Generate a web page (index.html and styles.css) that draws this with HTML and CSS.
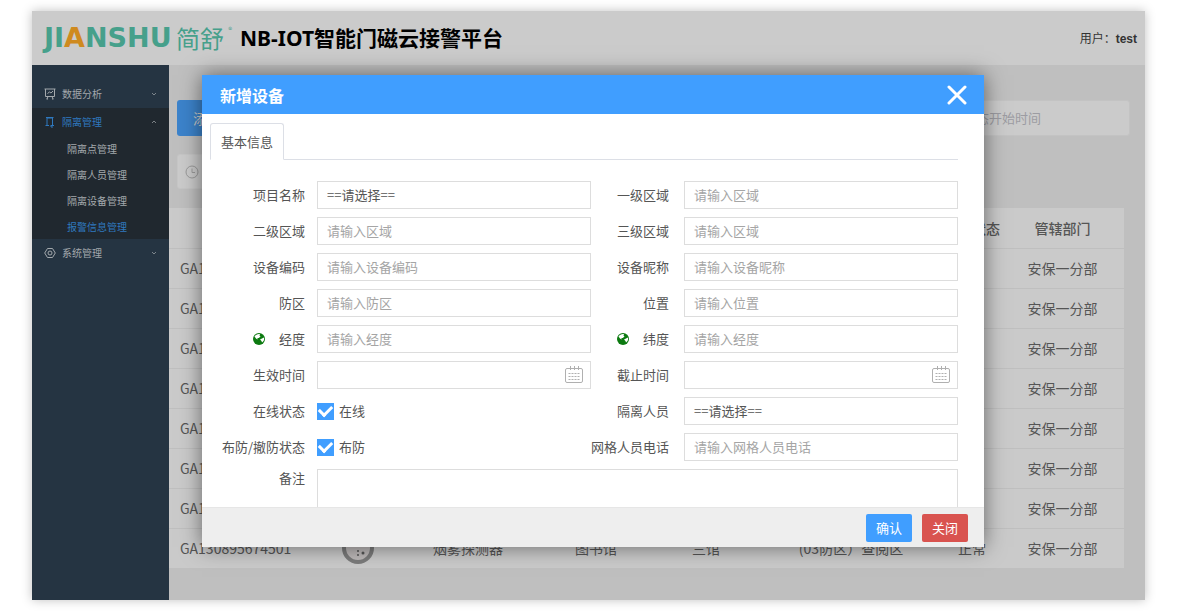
FILE: index.html
```
<!DOCTYPE html>
<html lang="zh-CN">
<head>
<meta charset="utf-8">
<title>NB-IOT智能门磁云接警平台</title>
<link rel="stylesheet" href="styles.css">
</head>
<body>
<div class="shell">
  <header class="topbar">
    <div class="logo"><span class="logo-latin">JI<span class="logo-accent">A</span>NSHU</span><span class="logo-han">简舒</span><sup class="logo-mark">®</sup></div>
    <h1 class="title">NB-IOT智能门磁云接警平台</h1>
    <div class="user">用户：<strong>test</strong></div>
  </header>
  <div class="main">
    <nav class="sidebar">
      <a class="item" href="#"><svg class="icon" viewBox="0 0 12 12"><path d="M.5 1h11M1.500 1v7.500h9V1M3.500 5.500l2-1.500 1.500 1 2-2M4 8.500L3 11M8 8.500L9 11M2.500 11h1.500M8 11h1.500"/></svg><span class="name">数据分析</span><svg class="chev" viewBox="0 0 6 6"><path d="M1 2l2 2 2-2"/></svg></a>
      <div class="group">
        <a class="item active" href="#"><svg class="icon" viewBox="0 0 12 12"><path d="M3 9.500V2h5.500v7.500M1.500 9.500H5M7 9.500h3M2 1.500h7.500M7 9v2h2"/></svg><span class="name">隔离管理</span><svg class="chev" viewBox="0 0 6 6"><path d="M1 4l2-2 2 2"/></svg></a>
        <a class="sub" href="#">隔离点管理</a>
        <a class="sub" href="#">隔离人员管理</a>
        <a class="sub" href="#">隔离设备管理</a>
        <a class="sub active" href="#">报警信息管理</a>
      </div>
      <a class="item" href="#"><svg class="icon" viewBox="0 0 12 12"><path d="M3.500 1.500h5L11.300 6l-2.800 4.500h-5L.7 6z"/><circle cx="6" cy="6" r="2"/></svg><span class="name">系统管理</span><svg class="chev" viewBox="0 0 6 6"><path d="M1 2l2 2 2-2"/></svg></a>
    </nav>
    <section class="content">
      <div class="tools">
        <button class="add" type="button">添加</button>
        <input class="search" type="text" aria-label="开始时间" placeholder="状态开始时间">
      </div>
      <div class="tools second">
        <div class="time"><svg class="clock" viewBox="0 0 14 14"><circle cx="7" cy="7" r="6"/><path d="M7 3.500V7.500h3"/></svg></div>
      </div>
      <table class="grid">
        <colgroup><col class="c1"><col class="c2"><col class="c3"><col class="c4"><col class="c5"><col class="c6"><col class="c7"><col class="c8"></colgroup>
        <thead><tr><th></th><th></th><th></th><th></th><th></th><th></th><th>报警状态</th><th>管辖部门</th></tr></thead>
        <tbody>
          <tr><td>GA1</td><td></td><td></td><td></td><td></td><td></td><td></td><td>安保一分部</td></tr>
          <tr><td>GA1</td><td></td><td></td><td></td><td></td><td></td><td></td><td>安保一分部</td></tr>
          <tr><td>GA1</td><td></td><td></td><td></td><td></td><td></td><td></td><td>安保一分部</td></tr>
          <tr><td>GA1</td><td></td><td></td><td></td><td></td><td></td><td></td><td>安保一分部</td></tr>
          <tr><td>GA1</td><td></td><td></td><td></td><td></td><td></td><td></td><td>安保一分部</td></tr>
          <tr><td>GA1</td><td></td><td></td><td></td><td></td><td></td><td></td><td>安保一分部</td></tr>
          <tr><td>GA1</td><td></td><td></td><td></td><td></td><td></td><td></td><td>安保一分部</td></tr>
          <tr><td>GA130895674501</td><td><svg class="device" viewBox="0 0 32 32"><circle cx="16" cy="16" r="14" fill="#bdb9b9" stroke="#7b7b7b" stroke-width="4"/><g fill="#555"><circle cx="16" cy="19" r="1"/><circle cx="16" cy="23" r="1"/><circle cx="21" cy="21" r="1.500"/></g></svg></td><td>烟雾探测器</td><td>图书馆</td><td>三馆</td><td>(03防区）查阅区</td><td>正常</td><td>安保一分部</td></tr>
        </tbody>
      </table>
    </section>
  </div>

  <div class="modal" role="dialog" aria-labelledby="dlg-title">
    <div class="modal-head">
      <h2 class="modal-title" id="dlg-title">新增设备</h2>
      <button class="close" type="button" aria-label="关闭窗口"><svg class="close-icon" viewBox="0 0 20 20"><path d="M2 2l16 16M18 2L2 18"/></svg></button>
    </div>
    <form class="modal-body">
      <div class="tabs"><button class="tab" type="button">基本信息</button></div>
      <div class="fields">
        <label class="label" for="project">项目名称</label>
        <select class="box" id="project"><option>==请选择==</option></select>
        <label class="label right" for="area1">一级区域</label>
        <input class="box" id="area1" type="text" placeholder="请输入区域">

        <label class="label" for="area2">二级区域</label>
        <input class="box" id="area2" type="text" placeholder="请输入区域">
        <label class="label right" for="area3">三级区域</label>
        <input class="box" id="area3" type="text" placeholder="请输入区域">

        <label class="label" for="code">设备编码</label>
        <input class="box" id="code" type="text" placeholder="请输入设备编码">
        <label class="label right" for="nick">设备昵称</label>
        <input class="box" id="nick" type="text" placeholder="请输入设备昵称">

        <label class="label" for="zone">防区</label>
        <input class="box" id="zone" type="text" placeholder="请输入防区">
        <label class="label right" for="place">位置</label>
        <input class="box" id="place" type="text" placeholder="请输入位置">

        <label class="label" for="lng"><svg class="globe" viewBox="0 0 12 12"><circle cx="6" cy="6" r="6" fill="#0c7a10"/><path fill="#fff" d="M1.500 3.500C2.500 1.500 5 .6 7 1L6.500 2.500 7.500 3.500 5.800 5 4.500 5 4.500 6.500 3 5.500zM7 6.500l4-2c.5 2-.3 4-2 5L8.500 8z"/></svg>经度</label>
        <input class="box" id="lng" type="text" placeholder="请输入经度">
        <label class="label right" for="lat"><svg class="globe" viewBox="0 0 12 12"><circle cx="6" cy="6" r="6" fill="#0c7a10"/><path fill="#fff" d="M1.500 3.500C2.500 1.500 5 .6 7 1L6.500 2.500 7.500 3.500 5.800 5 4.500 5 4.500 6.500 3 5.500zM7 6.500l4-2c.5 2-.3 4-2 5L8.500 8z"/></svg>纬度</label>
        <input class="box" id="lat" type="text" placeholder="请输入经度">

        <label class="label" for="start">生效时间</label>
        <div class="date"><input class="box" id="start" type="text"><svg class="cal" viewBox="0 0 18 18"><rect x=".5" y="2.500" width="17" height="14" rx="1.500"/><path d="M5.500 0v4M9.500 0v4M13.500 0v4"/><path class="dots" d="M3.500 7.500h12M3.500 10.500h12M3.500 13.500h12"/></svg></div>
        <label class="label right" for="end">截止时间</label>
        <div class="date"><input class="box" id="end" type="text"><svg class="cal" viewBox="0 0 18 18"><rect x=".5" y="2.500" width="17" height="14" rx="1.500"/><path d="M5.500 0v4M9.500 0v4M13.500 0v4"/><path class="dots" d="M3.500 7.500h12M3.500 10.500h12M3.500 13.500h12"/></svg></div>

        <span class="label">在线状态</span>
        <label class="tick"><input class="check" type="checkbox" checked>在线</label>
        <label class="label right" for="person">隔离人员</label>
        <select class="box" id="person"><option>==请选择==</option></select>

        <span class="label">布防/撤防状态</span>
        <label class="tick"><input class="check" type="checkbox" checked>布防</label>
        <label class="label right" for="phone">网格人员电话</label>
        <input class="box" id="phone" type="text" placeholder="请输入网格人员电话">

        <label class="label note-label" for="note">备注</label>
        <textarea class="box note" id="note"></textarea>
      </div>
    </form>
    <div class="modal-foot">
      <button class="btn primary" type="button">确认</button>
      <button class="btn danger" type="button">关闭</button>
    </div>
  </div>
</div>
</body>
</html>
```
FILE: styles.css
```
* { box-sizing: border-box; }

body {
  margin: 0;
  min-height: 100vh;
  padding: 11px 35px 13px 32px;
  display: flex;
  background: #fff;
  font: 13px/20px "Noto Sans CJK SC", sans-serif;
  color: #555;
}

button, input, select, textarea { font: inherit; color: inherit; }
a { color: inherit; text-decoration: none; }
svg { flex: none; fill: none; stroke: currentColor; }

.shell {
  position: relative;
  flex: 1;
  display: flex;
  flex-direction: column;
  background: #bfbfbf;
  box-shadow: 0 0 10px rgba(0, 0, 0, .25);
}

/* Top bar */
.topbar {
  height: 54px;
  display: flex;
  align-items: center;
  padding: 0 8px 0 12px;
  background: #cbcbcb;
}
.logo {
  width: 188px;
  display: flex;
  align-items: center;
  justify-content: space-between;
  color: #46a08b;
  line-height: 24px;
}
.logo-latin { font: bold 27px/24px "DejaVu Sans", sans-serif; }
.logo-accent { color: #cf8a1f; }
.logo-han { font-size: 24px; }
.logo-mark { font-size: 8px; line-height: 8px; align-self: flex-start; }
.title {
  margin: 0 auto 0 8px;
  color: #000;
  font: bold 21px/28px "Noto Sans", "Noto Sans CJK SC", sans-serif;
}
.user { color: #333; font-size: 12px; }
.user strong { font-family: "Liberation Sans", sans-serif; font-size: 12px; }

/* Side menu */
.main { flex: 1; display: flex; }
.sidebar {
  width: 137px;
  padding-top: 15px;
  background: #253442;
  color: #a3a8ac;
  font-size: 10px;
}
.item { height: 28px; display: flex; align-items: center; gap: 6px; padding: 0 12px; }
.name { flex: 1; }
.icon { width: 12px; height: 12px; }
.chev { width: 6px; height: 6px; opacity: .7; }
.group { background: #20282f; }
.sub { height: 26px; display: flex; align-items: center; padding-left: 35px; }
.sub.active { height: 25px; }
.active { color: #2f79bf; }
.active .chev { color: #a3a8ac; }

/* List page */
.content { flex: 1; padding: 35px 0 24px; font-size: 14px; }
.tools { display: flex; justify-content: space-between; padding: 0 15px 0 8px; }
.add {
  width: 70px;
  height: 36px;
  padding: 0 0 0 16px;
  border: 0;
  border-radius: 3px;
  background: #3c83cb;
  color: #cbcbcb;
  text-align: left;
}
.search {
  width: 180px;
  height: 36px;
  padding: 0 12px 2px;
  border: 1px solid #c3c3c3;
  border-radius: 3px;
  background: #cbcbcb;
  font-size: 13px;
}
.search::placeholder { color: #9c9ca2; opacity: 1; }
.second { padding-top: 18px; padding-bottom: 19px; }
.time {
  width: 180px;
  height: 35px;
  display: flex;
  align-items: center;
  padding-left: 7px;
  border: 1px solid #c6c6c6;
  border-radius: 3px;
  background: #cbcbcb;
}
.clock { width: 14px; height: 14px; color: #9a9a9a; }
.grid {
  width: calc(100% - 21px);
  table-layout: fixed;
  border-collapse: collapse;
  background: #cacaca;
  text-align: center;
}
.c1 { width: 150px; }
.c2 { width: 78px; }
.c3 { width: 142px; }
.c4 { width: 114px; }
.c5 { width: 106px; }
.c6 { width: 184px; }
.c7 { width: 58px; }
.grid th, .grid td { height: 40px; padding: 0; border-bottom: 1px solid #bfbfbf; white-space: nowrap; }
.grid th { font-weight: 500; }
.grid td { padding-bottom: 1px; }
.grid td:first-child { padding-left: 11px; text-align: left; }
.device { display: block; width: 32px; height: 32px; margin: 0 auto; stroke: none; }

/* Dialog */
.modal {
  position: absolute;
  inset: 64px 161px 53px 170px;
  display: flex;
  flex-direction: column;
  background: #fff;
  box-shadow: 0 0 20px rgba(0, 0, 0, .5);
}
.modal-head {
  height: 39px;
  display: flex;
  align-items: center;
  justify-content: space-between;
  padding: 0 17px 0 18px;
  background: #409eff;
  color: #fff;
}
.modal-title { margin: 0; font-size: 16px; line-height: 24px; }
.close { display: flex; padding: 0; border: 0; background: none; }
.close-icon { width: 20px; height: 20px; stroke-width: 3; stroke-linecap: round; }
.modal-body { flex: 1; min-height: 0; overflow: hidden; padding: 9px 26px 0 8px; }
.tabs { height: 37px; display: flex; border-bottom: 1px solid #dcdfe6; }
.tab {
  height: 37px;
  padding: 0 10px;
  border: 1px solid #dcdfe6;
  border-bottom-color: #fff;
  border-radius: 3px 3px 0 0;
  background: #fff;
}
.fields {
  display: grid;
  grid-template-columns: 95px 1fr 69px 1fr;
  grid-auto-rows: 28px;
  column-gap: 12px;
  row-gap: 8px;
  padding-top: 21px;
}
.label {
  display: flex;
  align-items: center;
  justify-content: flex-end;
  gap: 14px;
  white-space: nowrap;
}
.right { padding-right: 3px; }
.box {
  width: 100%;
  height: 28px;
  margin: 0;
  padding: 0 9px 2px;
  border: 1px solid #ddd;
  border-radius: 0;
  background: #fff;
  appearance: none;
}
select.box { padding-bottom: 0; }
.box::placeholder { color: #a5a5a5; opacity: 1; }
.globe { width: 12px; height: 12px; stroke: none; }
.date { position: relative; }
.cal { position: absolute; top: 5px; right: 8px; width: 18px; height: 18px; color: #b0b0b0; }
.dots { stroke-width: 1; stroke-dasharray: 2 1; }
.tick { display: flex; align-items: center; gap: 5px; }
.check {
  width: 17px;
  height: 17px;
  margin: 0;
  display: grid;
  place-items: center;
  appearance: none;
  background: #409eff;
}
.check:checked::after {
  content: "";
  width: 10px;
  height: 6px;
  margin-bottom: 3px;
  border: solid #fff;
  border-width: 0 0 3px 3px;
  transform: rotate(-45deg);
}
.note { grid-column: 2 / -1; height: 80px; resize: none; }
.note-label { height: 18px; }
.modal-foot {
  height: 40px;
  display: flex;
  align-items: center;
  justify-content: flex-end;
  gap: 10px;
  padding: 0 16px;
  border-top: 1px solid #e6e6e6;
  background: #eee;
}
.btn {
  height: 28px;
  padding: 0 10px;
  border: 0;
  border-radius: 2px;
  color: #fff;
}
.primary { background: #409eff; }
.danger { background: #d9534f; }
```
